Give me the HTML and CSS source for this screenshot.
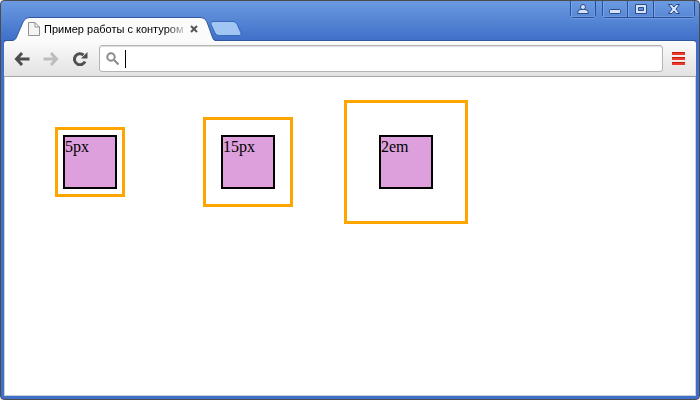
FILE: index.html
```html
<!DOCTYPE html>
<html lang="ru">

<head>
    <meta charset="utf-8">
    <meta name="viewport" content="width=device-width, initial-scale=1">
    <title>Пример работы с контуром</title>
    <link rel="stylesheet" href="styles.css">
</head>

<body>
    <div class="window">
        <header class="titlebar">
            <div class="tab">
                <svg class="tab-shape" width="206" height="24" viewBox="0 0 206 24">
                    <path class="tab-fill" d="M0 24 C5 24 6 22 7 19 L13 5 Q15 .5 19 .5 H191 Q195 .5 197 5 L202 19 Q203 24 206 24 Z" />
                    <path class="tab-line" d="M0 23.500 C5 23.500 6 22 7 19 L13 5 Q15 .5 19 .5 H191 Q195 .5 197 5 L202 19 Q203 23.500 206 23.500" />
                </svg>
                <svg class="page-icon" width="12" height="14" viewBox="0 0 12 14">
                    <path d="M.5 .5 H7 L11.500 5 V13.500 H.5 Z M7 .5 V5 H11.500" />
                </svg>
                <span class="tab-title">Пример работы с контуром</span>
                <button class="tab-close" aria-label="Закрыть вкладку">
                    <svg width="8" height="8" viewBox="0 0 8 8"><path d="M1 1 L7 7 M7 1 L1 7" /></svg>
                </button>
            </div>
            <button class="new-tab" aria-label="Новая вкладка">
                <svg width="32" height="15" viewBox="0 0 32 15">
                    <path d="M3 .5 H23 Q26 .5 27 3 L31 12 Q31.500 14.500 29 14.500 H9 Q6 14.500 5 12 L.8 3 Q.5 .5 3 .5 Z" />
                </svg>
            </button>
            <div class="controls">
                <div class="group user">
                    <button aria-label="Пользователь">
                        <svg width="12" height="12" viewBox="0 0 12 12"><path d="M.8 10.500 V9 Q1 6.500 4 6.500 H8 Q11 6.500 11.200 9 V10.500 Z" /><circle cx="6" cy="4" r="2.500" /></svg>
                    </button>
                </div>
                <div class="group">
                    <button aria-label="Свернуть">
                        <svg width="12" height="12" viewBox="0 0 12 12"><rect x=".5" y="6.500" width="11" height="4" rx="1" /></svg>
                    </button>
                    <button aria-label="Развернуть">
                        <svg width="12" height="12" viewBox="0 0 12 12"><path fill-rule="evenodd" d="M.5 1.500 H11.500 V10.500 H.5 Z M3.500 4.500 V7.500 H8.500 V4.500 Z" /></svg>
                    </button>
                    <button class="close" aria-label="Закрыть">
                        <svg width="12" height="12" viewBox="0 0 12 12"><path d="M.5 1.500 H4 L6 4 L8 1.500 H11.500 L8 6 L11.500 10.500 H8 L6 8 L4 10.500 H.5 L4 6 Z" /></svg>
                    </button>
                </div>
            </div>
        </header>

        <nav class="toolbar">
            <button class="nav-btn" aria-label="Назад">
                <svg width="16" height="14" viewBox="0 0 16 14"><path d="M15.500 7 H2.500 M8 1 L2.500 7 L8 13" /></svg>
            </button>
            <button class="nav-btn forward" aria-label="Вперёд">
                <svg width="16" height="14" viewBox="0 0 16 14"><path d="M.5 7 H13.500 M8 1 L13.500 7 L8 13" /></svg>
            </button>
            <button class="nav-btn reload" aria-label="Обновить">
                <svg width="16" height="14" viewBox="0 0 16 14"><path d="M11.500 3 A5.500 5.500 0 1 0 13 9.500" /><path class="head" d="M15.500 0 V6.500 H9 Z" /></svg>
            </button>
            <div class="omnibox">
                <svg class="search-icon" width="14" height="14" viewBox="0 0 14 14"><circle cx="5" cy="5" r="3.700" /><path d="M8 8 L12.500 12.500" /></svg>
                <span class="caret"></span>
                <input type="text" aria-label="Адрес">
            </div>
            <button class="menu" aria-label="Меню"><i></i><i></i><i></i></button>
        </nav>

        <main class="page">
            <div class="box offset-small">5px</div>
            <div class="box offset-medium">15px</div>
            <div class="box offset-em">2em</div>
        </main>
    </div>
</body>

</html>
```
FILE: styles.css
```css
* {
    box-sizing: border-box;
}

body {
    margin: 0;
    background: #fff;
}

button {
    padding: 0;
    border: none;
    background: none;
}

svg {
    display: block;
}

/* Browser window frame */

.window {
    display: flex;
    flex-direction: column;
    min-height: 100vh;
    padding: 0 3px 3px;
    border: 1px solid #4c4c4c;
    border-radius: 4px;
    background: linear-gradient(#6a9ae0, #3f6fc8 40px);
}

.titlebar {
    display: flex;
    align-items: flex-end;
    height: 40px;
    box-shadow: inset 0 -1px #2f589f;
}

/* Tab */

.tab {
    position: relative;
    display: flex;
    align-items: center;
    width: 206px;
    height: 24px;
    margin-left: 6px;
    padding-left: 18px;
}

.tab-shape {
    position: absolute;
    top: 0;
    left: 0;
}

.tab-fill {
    fill: #fbfbfb;
}

.tab-line {
    fill: none;
    stroke: #2f589f;
}

.page-icon {
    position: relative;
    fill: #f4f4f4;
    stroke: #929292;
}

.tab-title {
    position: relative;
    width: 140px;
    margin-left: 4px;
    overflow: hidden;
    font: 11px/16px "Liberation Sans", Tahoma, sans-serif;
    white-space: nowrap;
    color: #000;
    -webkit-mask-image: linear-gradient(to right, #000 122px, rgba(0, 0, 0, 0.2));
    mask-image: linear-gradient(to right, #000 122px, rgba(0, 0, 0, 0.2));
}

.tab-close {
    position: relative;
    margin-left: 6px;
}

.tab-close svg {
    fill: none;
    stroke: #555;
    stroke-width: 2;
}

.new-tab {
    align-self: center;
    margin-top: 15px;
    margin-left: -6px;
}

.new-tab svg {
    fill: #a2c6f4;
    stroke: #3868b8;
}

/* Window buttons */

.controls {
    display: flex;
    align-self: flex-start;
    gap: 6px;
    margin-right: 1px;
    margin-left: auto;
}

.group {
    display: flex;
    height: 17px;
    border: 1px solid #294f93;
    border-top: none;
    border-radius: 0 0 4px 4px;
    box-shadow: 0 1px 0 #6f9ce2;
}

.group button {
    display: flex;
    justify-content: center;
    width: 24px;
    padding-top: 2px;
    box-shadow: inset 1px 0 #7ba6e8, inset -1px -1px #6c98e0;
}

.group button + button {
    width: 26px;
    border-left: 1px solid #294f93;
}

.group button.close {
    width: 41px;
}

.group svg {
    fill: #d5e3fa;
    stroke: #2b4c87;
}

/* Toolbar */

.toolbar {
    display: flex;
    align-items: center;
    height: 36px;
    padding: 0 11px 0 10px;
    border-bottom: 1px solid #a8a8a8;
    border-radius: 3px 3px 0 0;
    background: linear-gradient(#fbfbfb, #e2e2e2);
}

.nav-btn {
    margin-right: 13px;
}

.nav-btn svg {
    fill: none;
    stroke: #4f4f4f;
    stroke-width: 3;
}

.forward svg {
    stroke: #bdbdbd;
}

.reload {
    margin-right: 11px;
}

.reload .head {
    fill: #4f4f4f;
    stroke: none;
}

.omnibox {
    display: flex;
    flex: 1;
    align-items: center;
    height: 27px;
    padding-left: 6px;
    border: 1px solid #b4b4b4;
    border-radius: 3px;
    background: #fff;
    box-shadow: inset 0 1px 1px #ddd;
}

.search-icon {
    fill: none;
    stroke: #8a8a8a;
    stroke-width: 2;
}

.caret {
    width: 1px;
    height: 18px;
    margin-left: 5px;
    background: #000;
}

.omnibox input {
    flex: 1;
    min-width: 0;
    padding: 0;
    border: none;
    outline: none;
    background: none;
    font: 14px "Liberation Sans", Tahoma, sans-serif;
}

.menu {
    display: grid;
    gap: 2px;
    margin-left: 9px;
}

.menu i {
    width: 13px;
    height: 3px;
    border-top: 1px solid #c9190b;
    background: #ee3a2c;
}

/* Page with the outlined boxes */

.page {
    flex: 1;
    padding: 8px;
    border: 1px solid #c9d2d8;
    border-top: none;
    background: #fff;
    font: 16px/20px "Liberation Serif", serif;
}

.box {
    display: inline-block;
    width: 54px;
    height: 54px;
    margin: 50px;
    border: 2px solid #000;
    outline: 3px solid orange;
    background: plum;
}

.offset-small {
    outline-offset: 5px;
}

.offset-medium {
    outline-offset: 15px;
}

.offset-em {
    outline-offset: 2em;
}
```
